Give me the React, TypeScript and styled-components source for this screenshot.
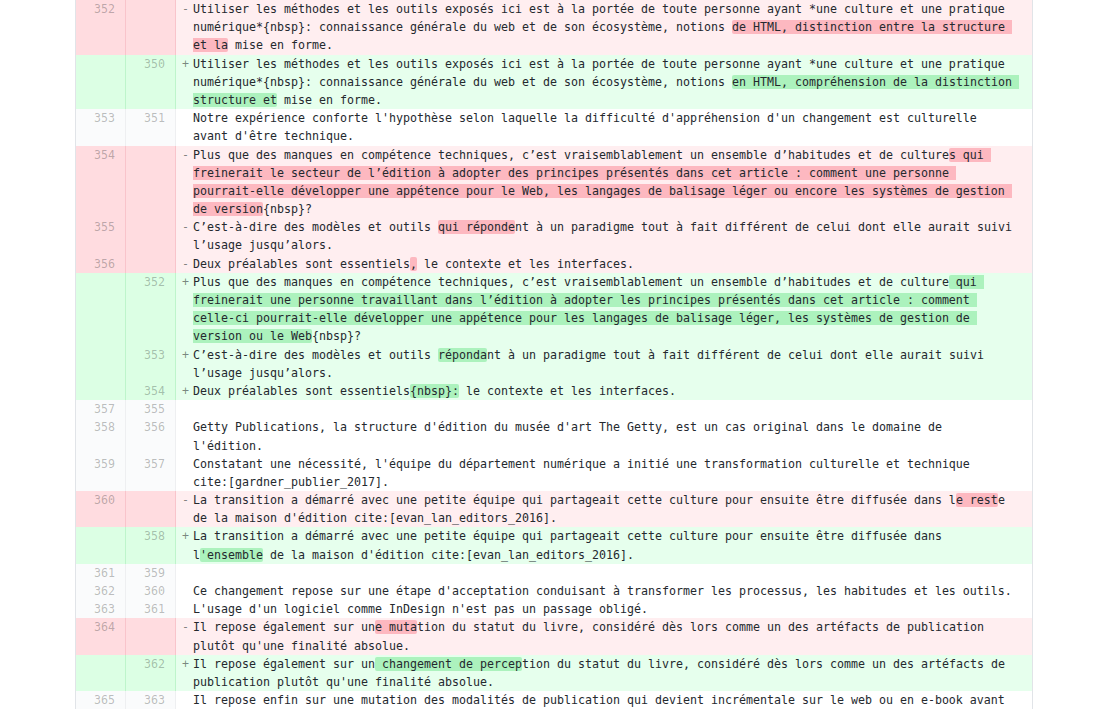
import React from "react";
import styled, { createGlobalStyle, css } from "styled-components";

type Kind = "del" | "add" | "ctx";

interface Row {
  k: Kind;
  o?: number;
  n?: number;
  t: string;
}

const GlobalStyle = createGlobalStyle`
  html, body {
    margin: 0;
    padding: 0;
    background: #ffffff;
    overflow: hidden;
  }
`;

const Page = styled.div`
  width: 1095px;
  height: 709px;
  overflow: hidden;
  background: #ffffff;
`;

const Diff = styled.div`
  margin-left: 75px;
  width: 958px;
  box-sizing: border-box;
  border-left: 1px solid #e1e4e8;
  border-right: 1px solid #e1e4e8;
  font-family: "DejaVu Sans Mono", monospace;
  font-size: 11.63px;
  line-height: 18.18px;
`;

const RowBox = styled.div`
  display: grid;
  grid-template-columns: 50px 50px 1fr;
`;

const numColors = {
  del: css`
    background: #ffdce0;
    border-right-color: #f9c4cb;
  `,
  add: css`
    background: #dcffe4;
    border-right-color: #bef5cb;
  `,
  ctx: css`
    background: #fafbfc;
    border-right-color: #eeeff1;
  `,
};

const codeColors = {
  del: css`
    background: #ffeef0;
  `,
  add: css`
    background: #e6ffed;
  `,
  ctx: css`
    background: #ffffff;
  `,
};

const NumCell = styled.div<{ $k: Kind }>`
  box-sizing: border-box;
  padding-right: 10px;
  text-align: right;
  color: rgba(27, 31, 35, 0.3);
  border-right: 1px solid;
  ${(p) => numColors[p.$k]}
`;

const CodeCell = styled.div<{ $k: Kind }>`
  display: flex;
  padding-right: 18px;
  ${(p) => codeColors[p.$k]}
`;

const Marker = styled.span`
  flex: none;
  width: 17px;
  box-sizing: border-box;
  padding-left: 6px;
  color: rgba(27, 31, 35, 0.55);
`;

const CodeText = styled.span`
  flex: 1;
  min-width: 0;
  white-space: pre-wrap;
  overflow-wrap: break-word;
  color: #24292e;
`;

const Mark = styled.span<{ $k: Kind }>`
  border-radius: 2px;
  background: ${(p) => (p.$k === "del" ? "#fdb8c0" : "#acf2bd")};
`;

const WJ = "\u2060";

const rows: Row[] = [
  {
    k: "del",
    o: 352,
    t: "Utiliser les méthodes et les outils exposés ici est à la portée de toute personne ayant *une culture et une pratique numérique*{nbsp}: connaissance générale du web et de son écosystème, notions ⟪de HTML, distinction entre la structure et la⟫ mise en forme.",
  },
  {
    k: "add",
    n: 350,
    t: "Utiliser les méthodes et les outils exposés ici est à la portée de toute personne ayant *une culture et une pratique numérique*{nbsp}: connaissance générale du web et de son écosystème, notions ⟪en HTML, compréhension de la distinction structure et⟫ mise en forme.",
  },
  {
    k: "ctx",
    o: 353,
    n: 351,
    t: "Notre expérience conforte l'hypothèse selon laquelle la difficulté d'appréhension d'un changement est culturelle avant d'être technique.",
  },
  {
    k: "del",
    o: 354,
    t: "Plus que des manques en compétence techniques, c’est vraisemblablement un ensemble d’habitudes et de culture⟪s qui freinerait le secteur de l’édition à adopter des principes présentés dans cet article : comment une personne pourrait-elle développer une appétence pour le Web, les langages de balisage léger ou encore les systèmes de gestion de version⟫{nbsp}?",
  },
  {
    k: "del",
    o: 355,
    t: "C’est-à-dire des modèles et outils ⟪qui réponde⟫nt à un paradigme tout à fait différent de celui dont elle aurait suivi l’usage jusqu’alors.",
  },
  {
    k: "del",
    o: 356,
    t: "Deux préalables sont essentiels⟪,⟫ le contexte et les interfaces.",
  },
  {
    k: "add",
    n: 352,
    t: "Plus que des manques en compétence techniques, c’est vraisemblablement un ensemble d’habitudes et de culture⟪ qui freinerait une personne travaillant dans l’édition à adopter les principes présentés dans cet article : comment celle-ci pourrait-elle développer une appétence pour les langages de balisage léger, les systèmes de gestion de version ou le Web⟫{nbsp}?",
  },
  {
    k: "add",
    n: 353,
    t: "C’est-à-dire des modèles et outils ⟪réponda⟫nt à un paradigme tout à fait différent de celui dont elle aurait suivi l’usage jusqu’alors.",
  },
  {
    k: "add",
    n: 354,
    t: "Deux préalables sont essentiels⟪{nbsp}:⟫ le contexte et les interfaces.",
  },
  { k: "ctx", o: 357, n: 355, t: "" },
  {
    k: "ctx",
    o: 358,
    n: 356,
    t: "Getty Publications, la structure d'édition du musée d'art The Getty, est un cas original dans le domaine de l'édition.",
  },
  {
    k: "ctx",
    o: 359,
    n: 357,
    t: `Constatant une nécessité, l'équipe du département numérique a initié une transformation culturelle et technique cite:${WJ}[gardner_publier_2017].`,
  },
  {
    k: "del",
    o: 360,
    t: `La transition a démarré avec une petite équipe qui partageait cette culture pour ensuite être diffusée dans l⟪e rest⟫e de la maison d'édition cite:${WJ}[evan_lan_editors_2016].`,
  },
  {
    k: "add",
    n: 358,
    t: `La transition a démarré avec une petite équipe qui partageait cette culture pour ensuite être diffusée dans l⟪'ensemble⟫ de la maison d'édition cite:${WJ}[evan_lan_editors_2016].`,
  },
  { k: "ctx", o: 361, n: 359, t: "" },
  {
    k: "ctx",
    o: 362,
    n: 360,
    t: "Ce changement repose sur une étape d'acceptation conduisant à transformer les processus, les habitudes et les outils.",
  },
  {
    k: "ctx",
    o: 363,
    n: 361,
    t: "L'usage d'un logiciel comme InDesign n'est pas un passage obligé.",
  },
  {
    k: "del",
    o: 364,
    t: "Il repose également sur un⟪e muta⟫tion du statut du livre, considéré dès lors comme un des artéfacts de publication plutôt qu'une finalité absolue.",
  },
  {
    k: "add",
    n: 362,
    t: "Il repose également sur un⟪ changement de percep⟫tion du statut du livre, considéré dès lors comme un des artéfacts de publication plutôt qu'une finalité absolue.",
  },
  {
    k: "ctx",
    o: 365,
    n: 363,
    t: "Il repose enfin sur une mutation des modalités de publication qui devient incrémentale sur le web ou en e-book avant l'impression.",
  },
];

const markerFor: Record<Kind, string> = { del: "-", add: "+", ctx: " " };

function renderText(text: string, k: Kind) {
  const parts = text.split(/⟪|⟫/);
  return parts.map((p, i) =>
    i % 2 === 1 ? (
      <Mark key={i} $k={k}>
        {p}
      </Mark>
    ) : (
      <React.Fragment key={i}>{p}</React.Fragment>
    )
  );
}

export default function App() {
  return (
    <Page>
      <GlobalStyle />
      <Diff>
        {rows.map((r, i) => (
          <RowBox key={i}>
            <NumCell $k={r.k}>{r.o ?? ""}</NumCell>
            <NumCell $k={r.k}>{r.n ?? ""}</NumCell>
            <CodeCell $k={r.k}>
              <Marker>{markerFor[r.k]}</Marker>
              <CodeText>{renderText(r.t, r.k)}</CodeText>
            </CodeCell>
          </RowBox>
        ))}
      </Diff>
    </Page>
  );
}
